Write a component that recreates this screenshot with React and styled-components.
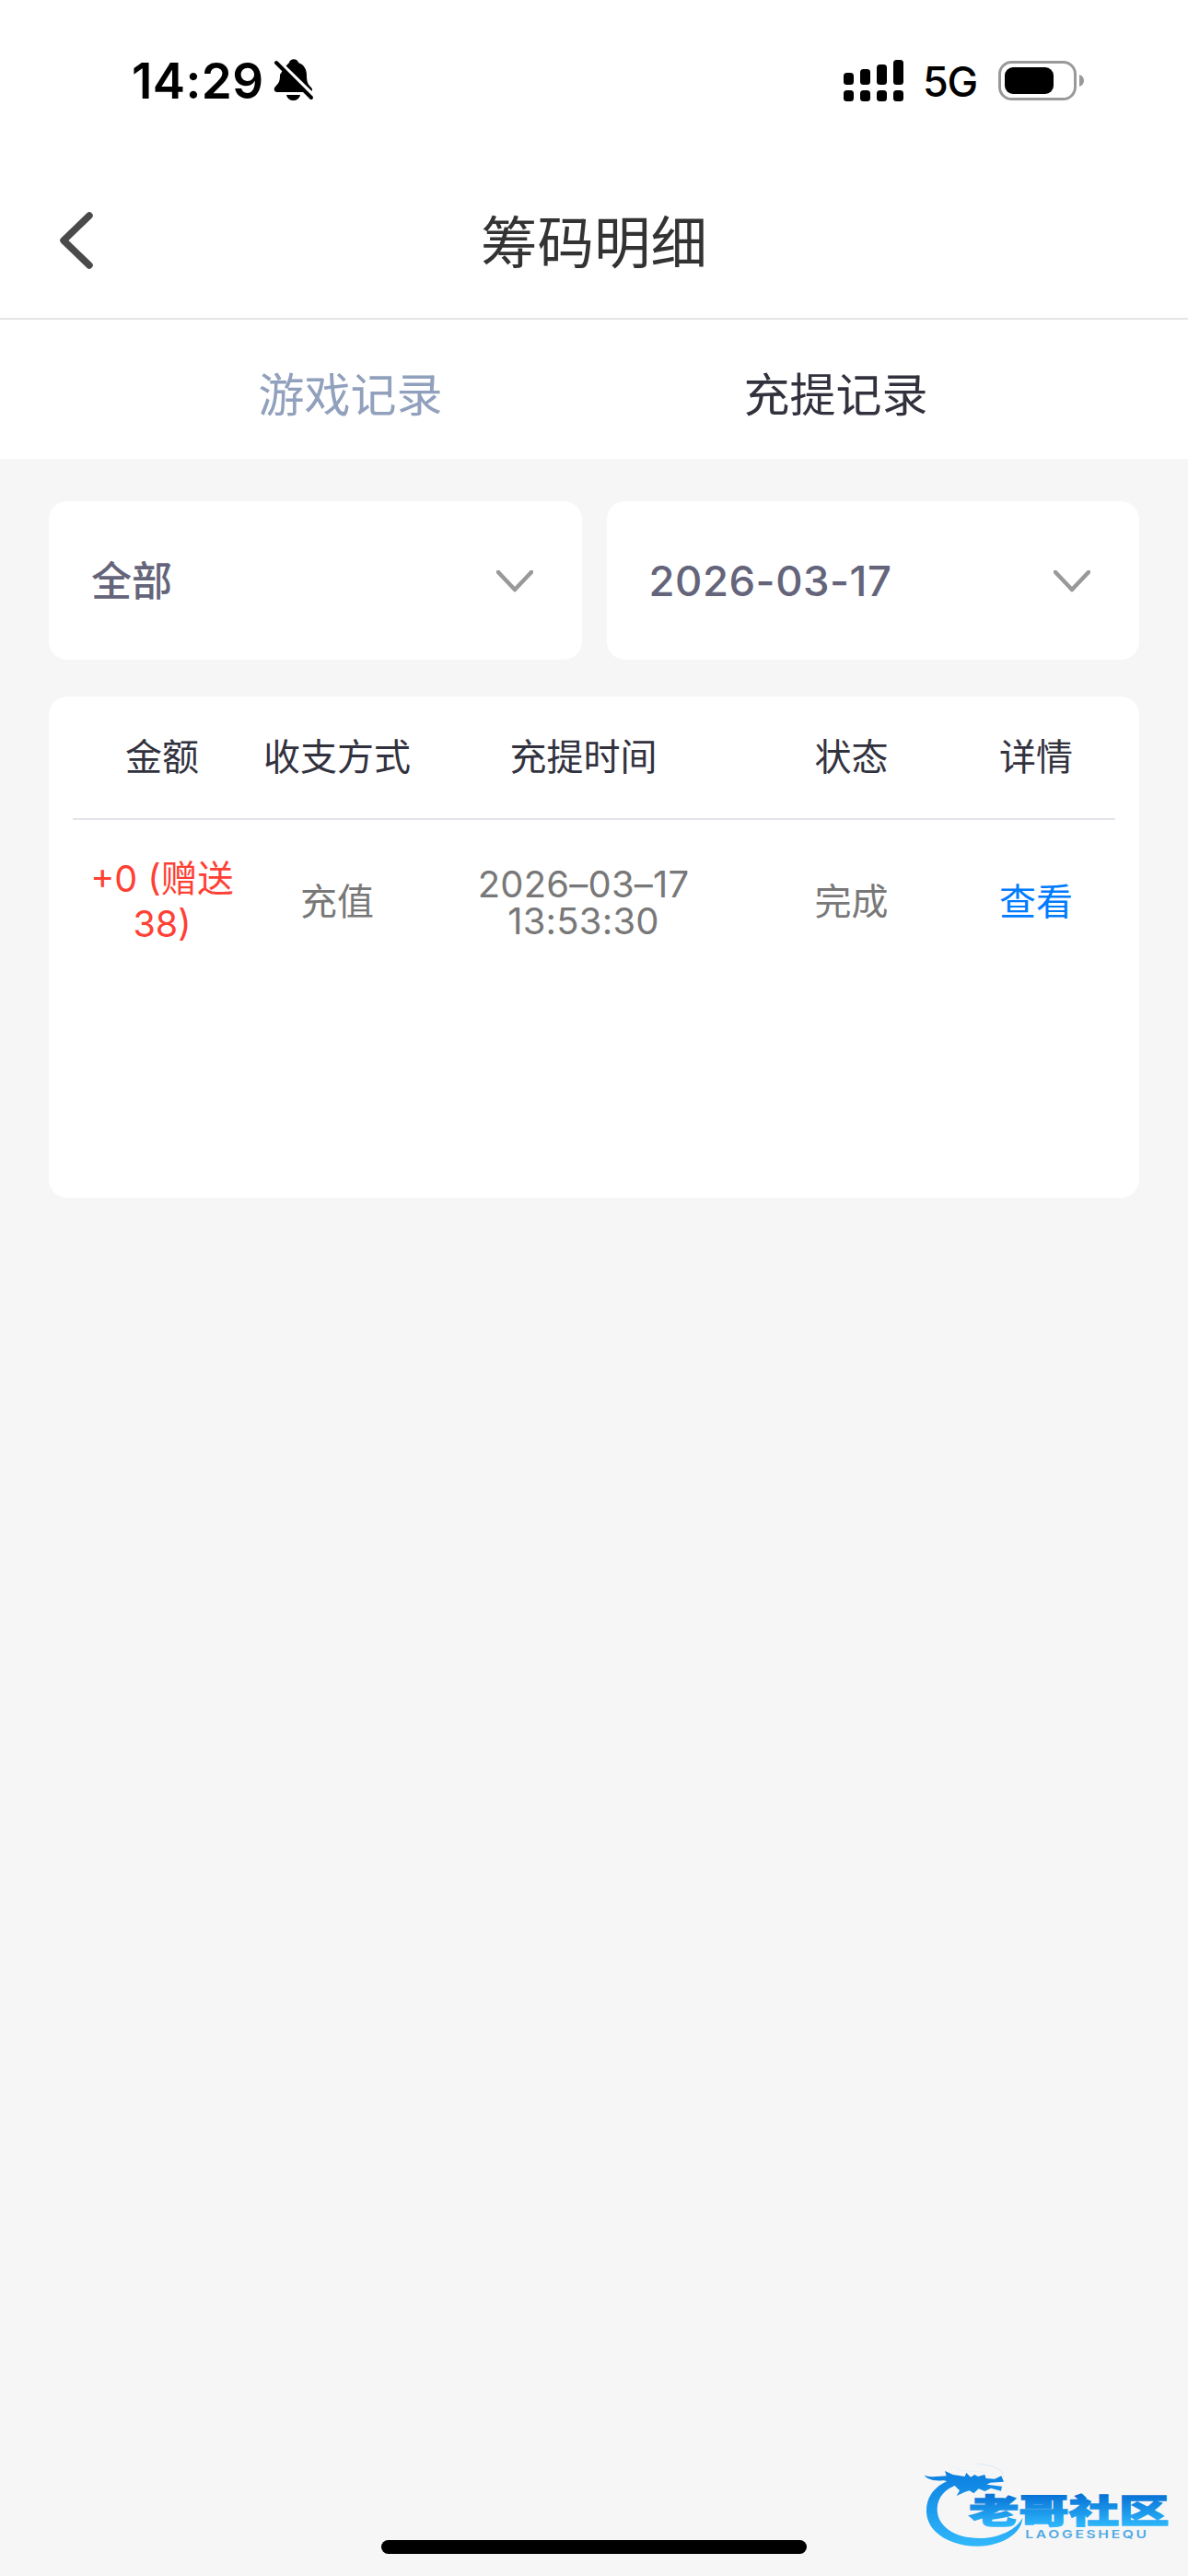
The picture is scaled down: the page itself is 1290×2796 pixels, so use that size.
import React from 'react';
import styled, { createGlobalStyle } from 'styled-components';

const GlobalStyle = createGlobalStyle`
  * {
    box-sizing: border-box;
  }

  body {
    margin: 0;
    background-color: #f6f6f6;
    font-family: Inter, "Noto Sans CJK SC", sans-serif;
  }
`;

const Page = styled.div`
  position: relative;
  width: 1290px;
  height: 2796px;
  display: flex;
  flex-direction: column;
  background-color: #f6f6f6;
  overflow: hidden;
`;

const StatusBar = styled.div`
  height: 177px;
  padding: 0 113px 3px 143px;
  display: flex;
  justify-content: space-between;
  align-items: center;
  background-color: #ffffff;
  color: #000000;

  svg {
    display: block;
  }
`;

const StatusGroup = styled.div`
  display: flex;
  align-items: center;
`;

const Clock = styled.span`
  width: 154px;
  padding-top: 2px;
  font-size: 53px;
  font-weight: 600;
  line-height: 60px;
  letter-spacing: 0.4px;
  white-space: nowrap;
`;

const Network = styled.span`
  width: 82px;
  margin-left: 21px;
  font-size: 45px;
  font-weight: 500;
  line-height: 60px;
  letter-spacing: -1.2px;
  padding-top: 3px;
`;

const Header = styled.header`
  height: 170px;
  padding: 0 65px;
  display: grid;
  grid-template-columns: 100px 1fr 100px;
  align-items: center;
  background-color: #ffffff;
  border-bottom: 2px solid #e5e5e5;
`;

const BackButton = styled.button`
  padding: 0;
  border: 0;
  background: none;

  svg {
    display: block;
  }
`;

const Title = styled.h1`
  margin: 0;
  padding-top: 6px;
  color: #333333;
  font-size: 61.5px;
  font-weight: 400;
  line-height: 80px;
  text-align: center;
`;

const Tabs = styled.nav`
  height: 151px;
  padding: 12px 119px 0 117px;
  display: flex;
  align-items: center;
  background-color: #ffffff;
`;

const Tab = styled.a`
  flex: 1;
  color: ${({ $active }) => ($active ? '#32323e' : '#91a0bc')};
  font-size: 50px;
  line-height: 70px;
  text-align: center;
`;

const Filters = styled.div`
  padding: 46px 53px 0;
  display: flex;
  gap: 27px;
`;

const Select = styled.div`
  flex: 1;
  height: 172px;
  padding: 2px 53px 0 46px;
  display: flex;
  justify-content: space-between;
  align-items: center;
  border-radius: 20px;
  background-color: #ffffff;
  color: #64647a;
  font-size: 44px;
  font-weight: 500;
  line-height: 60px;
`;

const DateValue = styled.span`
  font-size: 45.5px;
  letter-spacing: 0.5px;
`;

const Card = styled.section`
  height: 544px;
  margin: 40px 53px 0;
  padding: 0 26px;
  border-radius: 20px;
  background-color: #ffffff;
`;

const Row = styled.div`
  display: grid;
  grid-template-columns: 194px 186px 349px 233px 168px;
  align-items: center;
  text-align: center;
  font-size: 40px;
`;

const HeadRow = styled(Row)`
  height: 134px;
  border-bottom: 2px solid #e4e4ea;
  color: #32323e;
`;

const BodyRow = styled(Row)`
  height: 178px;
  color: #787878;
`;

const Cell = styled.div`
  line-height: 50px;
`;

const Amount = styled(Cell)`
  padding: 0 14px 1px;
  color: #ff4034;
  font-size: 39.5px;
  line-height: 49px;
`;

const Time = styled(Cell)`
  padding-top: 1px;
  line-height: 40px;
  letter-spacing: 0.2px;
`;

const DetailLink = styled.a`
  color: #007bff;
  line-height: 50px;
`;

const Watermark = styled.svg`
  position: absolute;
  right: 0;
  bottom: 0;
`;

const HomeIndicator = styled.div`
  width: 462px;
  height: 15px;
  margin: auto auto 24px;
  border-radius: 8px;
  background-color: #000000;
`;

const columns = ['金额', '收支方式', '充提时间', '状态', '详情'];

const signalBars = [
  { x: 0, y: 14 },
  { x: 18, y: 10 },
  { x: 36, y: 5 },
  { x: 54, y: 0 },
];

function MutedBell() {
  return (
    <svg width="44" height="46" viewBox="0 0 44 46">
      <path d="M13 8C15 6 16 5 17 4C18-1 26-1 27 4C33 6 36 11 36 18C36 26 38 28 41 31C43 33 42 36 39 36H4C0 36 0 32 2 30C6 26 7 24 7 17Z" />
      <path d="M14 39H29C28 43 25 45 21.500 45C18 45 15 43 14 39Z" />
      <path d="M4 1L44 40" stroke="#fff" strokeWidth="4" />
      <path d="M0 0V13L7 15Z" fill="#fff" />
      <path d="M3 4L41 42" stroke="#000" strokeWidth="4" strokeLinecap="round" />
    </svg>
  );
}

function Signal() {
  return (
    <svg width="65" height="45" viewBox="0 0 65 45">
      {signalBars.map(({ x, y }) => (
        <g key={x}>
          <rect x={x} y={y} width="11" height={27 - y} rx="3.5" />
          <rect x={x} y="33" width="11" height="12" rx="3.5" />
        </g>
      ))}
    </svg>
  );
}

function Battery() {
  return (
    <svg width="93" height="43" viewBox="0 0 93 43">
      <rect x="1.500" y="1.500" width="82" height="40" rx="13" fill="none" stroke="#999" strokeWidth="3" />
      <rect x="7" y="7" width="53" height="29" rx="9" />
      <path d="M88 15C91 16 93 18 93 21.500C93 25 91 27 88 28Z" fill="#999" />
    </svg>
  );
}

function ArrowDown() {
  return (
    <svg width="40" height="24" viewBox="0 0 40 24">
      <path d="M2 2L20 21L38 2" fill="none" stroke="#999" strokeWidth="4.500" strokeLinecap="round" strokeLinejoin="round" />
    </svg>
  );
}

function Logo() {
  return (
    <Watermark width="310" height="136" viewBox="0 0 930 408">
      <defs>
        <linearGradient id="ring" gradientUnits="userSpaceOnUse" x1="0" y1="70" x2="0" y2="310">
          <stop offset="0" stopColor="#0b7fe0" />
          <stop offset="1" stopColor="#30b8fb" />
        </linearGradient>
        <linearGradient id="name" gradientUnits="userSpaceOnUse" x1="0" y1="-92" x2="0" y2="8">
          <stop offset="0" stopColor="#0873d6" />
          <stop offset="1" stopColor="#2db7fb" />
        </linearGradient>
      </defs>
      <g fill="url(#ring)">
        <path d="M165 92C100 112 76 155 78 200C82 270 160 312 246 311C325 309 388 270 391 218C373 255 318 284 253 285C171 286 112 246 113 190C114 150 139 125 182 109Z" />
        <path d="M71 80C91 87 116 84 143 82L138 66L164 78L203 84L208 72L222 86L235 78L246 84L268 78L272 90L300 92L322 82L330 101L286 104L274 110L324 116L321 131L288 122L268 132L248 124L232 139L218 130L204 134L176 147L186 130L164 108L136 97C110 98 82 96 71 80Z" />
        <path d="M170 52C190 76 225 60 268 72" fill="none" stroke="#e6f0f8" strokeWidth="3" />
        <path d="M240 42C290 46 326 58 329 84" fill="none" stroke="#dcebf7" strokeWidth="3" />
      </g>
      <text
        transform="translate(216 237) scale(1.51 1)"
        fontFamily="Noto Sans CJK SC, sans-serif"
        fontSize="108"
        fontWeight="900"
        fill="url(#name)"
        stroke="url(#name)"
        strokeWidth="4"
      >
        老哥社区
      </text>
      <text
        transform="translate(400 286) scale(1.3 1)"
        fontFamily="Inter, sans-serif"
        fontSize="36"
        fontWeight="600"
        textLength="304"
        fill="#4fa8e4"
      >
        LAOGESHEQU
      </text>
    </Watermark>
  );
}

export default function App() {
  return (
    <>
      <GlobalStyle />
      <Page>
        <StatusBar>
          <StatusGroup>
            <Clock>14:29</Clock>
            <MutedBell />
          </StatusGroup>
          <StatusGroup>
            <Signal />
            <Network>5G</Network>
            <Battery />
          </StatusGroup>
        </StatusBar>
        <Header>
          <BackButton aria-label="返回">
            <svg width="36" height="62" viewBox="0 0 36 62">
              <path d="M32 4L4 31L32 58" fill="none" stroke="#4a4a4a" strokeWidth="7.500" strokeLinecap="round" strokeLinejoin="round" />
            </svg>
          </BackButton>
          <Title>筹码明细</Title>
        </Header>
        <Tabs>
          <Tab>游戏记录</Tab>
          <Tab $active>充提记录</Tab>
        </Tabs>
        <Filters>
          <Select>
            <span>全部</span>
            <ArrowDown />
          </Select>
          <Select>
            <DateValue>2026-03-17</DateValue>
            <ArrowDown />
          </Select>
        </Filters>
        <Card>
          <HeadRow>
            {columns.map((column) => (
              <Cell key={column}>{column}</Cell>
            ))}
          </HeadRow>
          <BodyRow>
            <Amount>+0 (赠送38)</Amount>
            <Cell>充值</Cell>
            <Time>2026–03–17 13:53:30</Time>
            <Cell>完成</Cell>
            <DetailLink>查看</DetailLink>
          </BodyRow>
        </Card>
        <HomeIndicator />
        <Logo />
      </Page>
    </>
  );
}
